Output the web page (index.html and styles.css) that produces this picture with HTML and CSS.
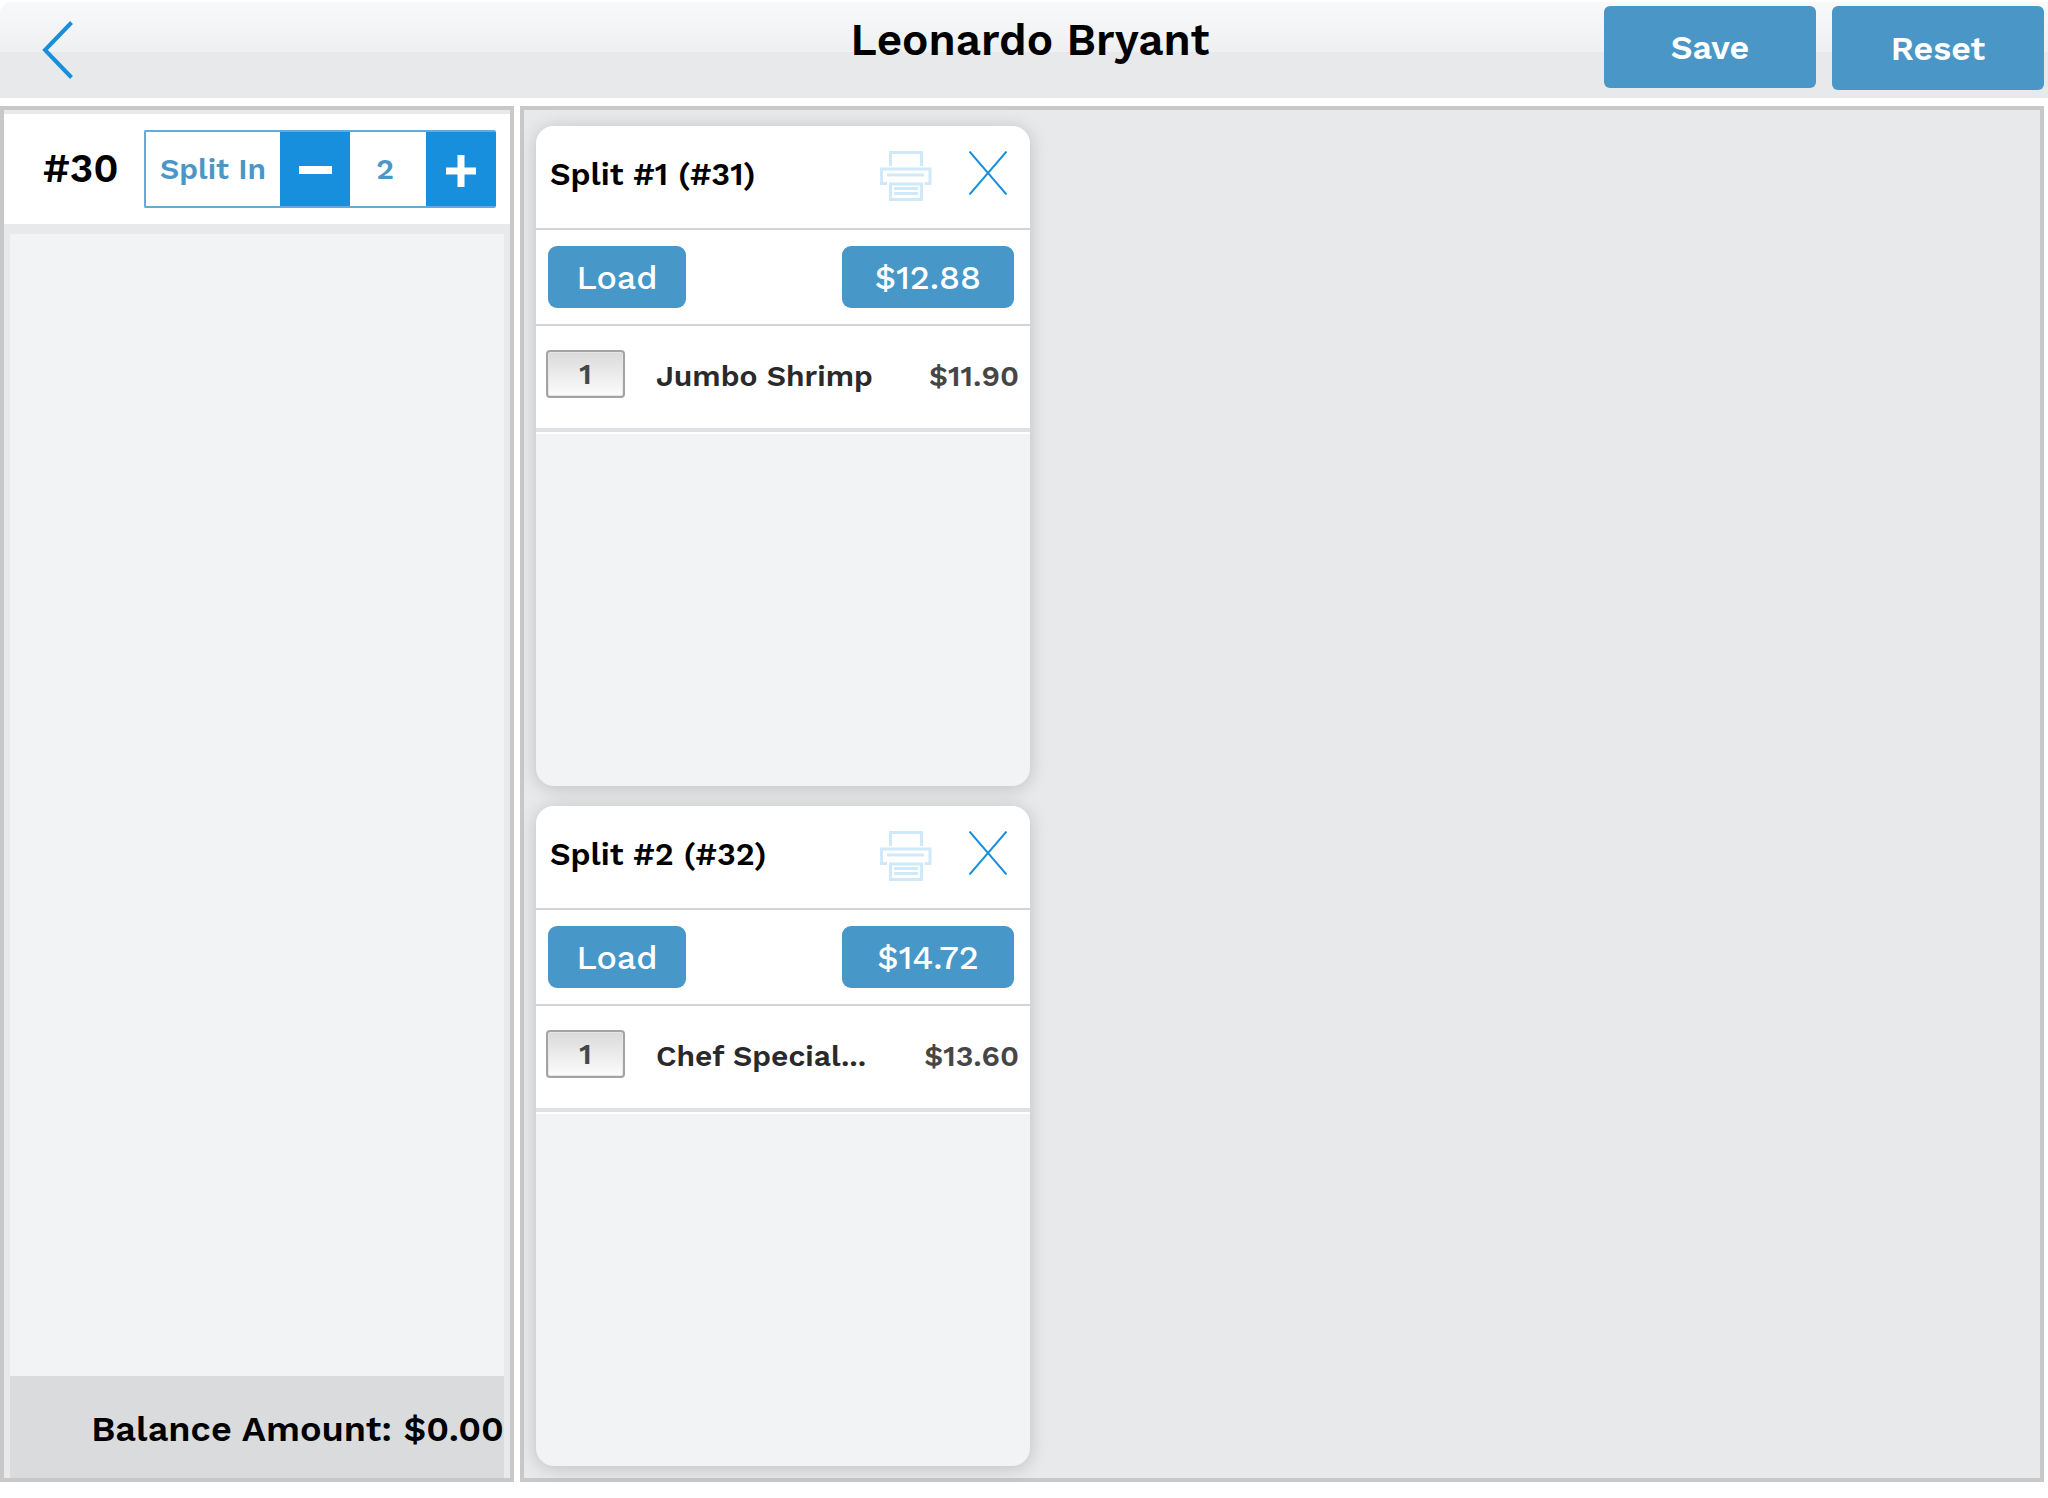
FILE: index.html
```
<!DOCTYPE html>
<html lang="en">
<head>
<meta charset="utf-8">
<meta name="viewport" content="width=device-width, initial-scale=1">
<title>Split order</title>
<link rel="stylesheet" href="styles.css">
</head>
<body>
<svg class="defs" aria-hidden="true">
  <symbol id="printer" viewBox="0 0 52 50">
    <g fill="none" stroke="#cfe9f9" stroke-width="3">
      <path d="M10.500 15V1.500h31V15M7 32.500H1.500V18H50V32.500H44.500M7 24h37M10.500 33h31v15.500h-31zM14 37.500h24M14 42.500h24"/>
    </g>
  </symbol>
  <symbol id="cross" viewBox="0 0 38 44">
    <path d="M.5 .5l37 43M37.500 .5l-37 43" fill="none" stroke="#178fdd" stroke-width="2"/>
  </symbol>
</svg>
<header class="topbar">
  <button class="icon-button back" type="button" aria-label="Back">
    <svg width="32" height="58" viewBox="0 0 32 58"><path d="M29.500 1.500L3 29l26.500 27.500" fill="none" stroke="#178fdd" stroke-width="4"/></svg>
  </button>
  <h1 class="customer">Leonardo Bryant</h1>
  <div class="actions">
    <button class="action" type="button">Save</button>
    <button class="action action-tall" type="button">Reset</button>
  </div>
</header>
<main class="workspace">
  <section class="panel order">
    <div class="order-head">
      <h2 class="order-number">#30</h2>
      <div class="stepper">
        <span class="stepper-label">Split In</span>
        <button class="step" type="button" aria-label="Fewer splits"><svg width="34" height="34" viewBox="0 0 34 34"><path d="M1 16h33" stroke="#fff" stroke-width="8"/></svg></button>
        <output class="stepper-value">2</output>
        <button class="step" type="button" aria-label="More splits"><svg width="34" height="34" viewBox="0 0 34 34"><path d="M2 17h30M17 1v32" stroke="#fff" stroke-width="7"/></svg></button>
      </div>
    </div>
    <div class="order-items"></div>
    <p class="balance">Balance Amount: $0.00</p>
  </section>
  <section class="panel splits">
    <article class="card">
      <header class="card-head">
        <h2 class="card-title">Split #1 (#31)</h2>
        <button class="icon-button" type="button" aria-label="Print"><svg width="52" height="50"><use href="#printer"/></svg></button>
        <button class="icon-button" type="button" aria-label="Remove split"><svg width="38" height="44"><use href="#cross"/></svg></button>
      </header>
      <div class="card-actions">
        <button class="pill" type="button">Load</button>
        <button class="pill pill-total" type="button">$12.88</button>
      </div>
      <ul class="items">
        <li class="item"><button class="qty" type="button">1</button><span class="name">Jumbo Shrimp</span><span class="price">$11.90</span></li>
      </ul>
    </article>
    <article class="card">
      <header class="card-head">
        <h2 class="card-title">Split #2 (#32)</h2>
        <button class="icon-button" type="button" aria-label="Print"><svg width="52" height="50"><use href="#printer"/></svg></button>
        <button class="icon-button" type="button" aria-label="Remove split"><svg width="38" height="44"><use href="#cross"/></svg></button>
      </header>
      <div class="card-actions">
        <button class="pill" type="button">Load</button>
        <button class="pill pill-total" type="button">$14.72</button>
      </div>
      <ul class="items">
        <li class="item"><button class="qty" type="button">1</button><span class="name">Chef Special...</span><span class="price">$13.60</span></li>
      </ul>
    </article>
  </section>
</main>
</body>
</html>
```
FILE: styles.css
```
* {
  box-sizing: border-box;
}

body {
  margin: 0;
  min-height: 100vh;
  padding: 2px 0 16px;
  display: flex;
  flex-direction: column;
  background: #fff;
  color: #000;
  font-family: "Work Sans", Inter, "Liberation Sans", sans-serif;
  font-weight: 600;
  font-variant-numeric: lining-nums;
}

h1, h2, p, ul {
  margin: 0;
  padding: 0;
  font-weight: 600;
}

button {
  padding: 0;
  border: 0;
  font: inherit;
  font-variant-numeric: lining-nums;
  cursor: pointer;
}

svg {
  display: block;
}

.defs {
  position: absolute;
  width: 0;
  height: 0;
}

.icon-button {
  background: none;
}

/* Top bar */
.topbar {
  display: grid;
  grid-template-columns: 1fr auto 1fr;
  align-items: start;
  height: 96px;
  padding: 4px 4px 0 16px;
  border-top-left-radius: 12px;
  background: linear-gradient(#f7f9fa, #eef0f1 50px, #e8e9eb 50px);
}

.back {
  justify-self: start;
  padding: 15px 26px;
}

.customer {
  padding-top: 10px;
  font-size: 44px;
  line-height: 48px;
}

.actions {
  display: flex;
  align-items: start;
  justify-content: flex-end;
  gap: 16px;
}

.action {
  width: 212px;
  height: 82px;
  border-radius: 6px;
  background: #4a97c7;
  color: #fff;
  font-size: 34px;
}

.action-tall {
  height: 84px;
}

/* Panels */
.workspace {
  flex: 1;
  display: grid;
  grid-template-columns: 514px 1fr;
  gap: 6px;
  padding: 8px 4px 0 0;
}

.panel {
  border: 4px solid #c8c8c8;
  background: #e8e9eb;
}

.order {
  display: flex;
  flex-direction: column;
  padding-top: 4px;
}

.order-head {
  display: flex;
  align-items: center;
  justify-content: space-between;
  height: 110px;
  padding: 0 14px 0 39px;
  background: #fff;
}

.order-number {
  padding-bottom: 2px;
  font-size: 40px;
}

.stepper {
  display: flex;
  align-items: stretch;
  width: 352px;
  height: 78px;
  border: 2px solid #66aad5;
  border-right: 0;
  border-radius: 2px;
  color: #4a97c7;
  font-size: 30px;
}

.stepper-label, .stepper-value {
  flex: 1;
  display: flex;
  align-items: center;
  justify-content: center;
  padding-bottom: 2px;
}

.stepper-value {
  flex: 0 0 76px;
  padding-right: 6px;
}

.step {
  display: flex;
  align-items: center;
  justify-content: center;
  width: 70px;
  padding-top: 4px;
  background: #178fdd;
}

.order-items {
  flex: 1;
  margin: 10px 6px 0;
  background: #f1f3f5;
}

.balance {
  margin: 0 6px;
  height: 102px;
  background: #dadbdd;
  font-size: 36px;
  line-height: 106px;
  text-align: right;
  white-space: nowrap;
}

/* Split cards */
.splits {
  display: grid;
  grid-template-rows: repeat(2, minmax(0, 1fr));
  grid-auto-columns: 494px;
  grid-auto-flow: column;
  gap: 20px;
  padding: 16px 12px 12px;
}

.card {
  overflow: hidden;
  border-radius: 18px;
  background: #f1f3f5;
  box-shadow: 0 2px 18px rgba(0, 0, 0, 0.18);
}

.card-head {
  display: flex;
  align-items: flex-start;
  gap: 37px;
  height: 104px;
  padding: 25px 23px 0 14px;
  border-bottom: 2px solid #d3d4d5;
  background: #fff;
}

.card-title {
  flex: 1;
  font-size: 32px;
  line-height: 46px;
}

.card-actions {
  display: flex;
  align-items: center;
  justify-content: space-between;
  height: 96px;
  padding: 0 16px 0 12px;
  border-bottom: 2px solid #d3d4d5;
  background: #fff;
}

.pill {
  width: 138px;
  height: 62px;
  border-radius: 9px;
  background: #4797c9;
  color: #fff;
  font-size: 34px;
  font-weight: 500;
}

.pill-total {
  width: 172px;
}

.items {
  border-bottom: 2px solid #fff;
  list-style: none;
}

.item {
  display: flex;
  align-items: flex-start;
  height: 106px;
  padding: 24px 11px 0 10px;
  border-bottom: 4px solid #e0e1e3;
  background: #fff;
  font-size: 30px;
  line-height: 52px;
}

.qty {
  width: 79px;
  height: 48px;
  margin-right: 31px;
  border: 2px solid #a3a3a3;
  border-radius: 4px;
  background: linear-gradient(#dadada, #fcfcfc);
  box-shadow: inset 0 0 0 1px #e6e6e6;
  color: #464646;
  line-height: 44px;
}

.name {
  flex: 1;
  color: #2a2a2a;
  white-space: nowrap;
}

.price {
  color: #464646;
}
```
